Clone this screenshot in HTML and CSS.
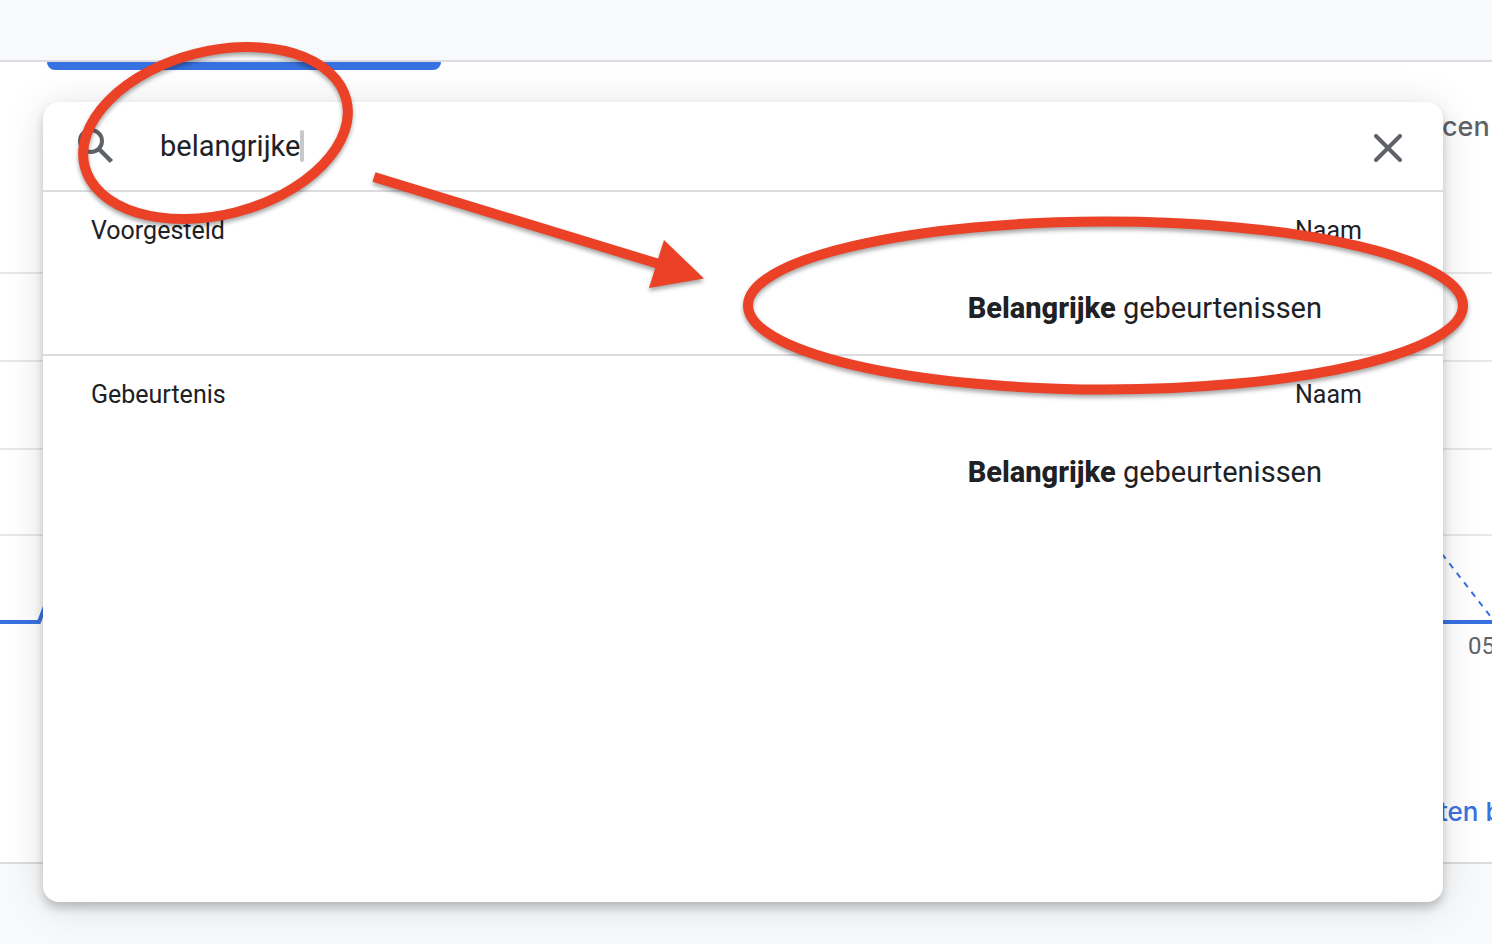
FILE: index.html
```
<!DOCTYPE html>
<html lang="nl">
<head>
<meta charset="UTF-8">
<meta name="viewport" content="width=device-width, initial-scale=1.0">
<title>Zoeken</title>
<link rel="stylesheet" href="styles.css">
</head>
<body>

<main class="report">
  <div class="tab-indicator"></div>
  <div class="report-title">cen</div>

  <div class="chart">
    <div class="grid-line"></div>
    <div class="grid-line"></div>
    <div class="grid-line short"></div>
    <div class="grid-line last">
      <svg width="50" height="88" viewBox="0 0 50 88">
        <path d="M0 86H39L49 60" fill="none" stroke="#3871e0" stroke-width="4"/>
      </svg>
      <svg width="52" height="88" viewBox="0 0 52 88">
        <path d="M0 86H52" stroke="#3871e0" stroke-width="4"/>
        <path d="M2 18L51 81" stroke="#3871e0" stroke-width="2" stroke-dasharray="6 6"/>
      </svg>
    </div>
    <div class="axis-label">05</div>
  </div>

  <a class="report-link" href="#">ten b</a>
</main>

<div class="dialog" role="dialog" aria-label="Zoeken">
  <div class="search">
    <svg class="search-icon" viewBox="0 0 36 36">
      <circle cx="13" cy="13" r="11" fill="none" stroke="#5f6368" stroke-width="4"/>
      <path d="M20.500 20.500L33.500 33.500" stroke="#5f6368" stroke-width="4.500"/>
    </svg>
    <input type="text" class="search-input" value="belangrijke" aria-label="Items zoeken">
    <span class="caret"></span>
    <button type="button" class="close" aria-label="Sluiten">
      <svg width="28" height="28" viewBox="0 0 28 28">
        <path d="M2 2L26 26M26 2L2 26" stroke="#5f6368" stroke-width="4" stroke-linecap="round"/>
      </svg>
    </button>
  </div>

  <section class="group">
    <div class="group-header"><span>Voorgesteld</span><span>Naam</span></div>
    <a class="result" href="#"><b>Belangrijke</b> gebeurtenissen</a>
  </section>
  <section class="group">
    <div class="group-header"><span>Gebeurtenis</span><span>Naam</span></div>
    <a class="result" href="#"><b>Belangrijke</b> gebeurtenissen</a>
  </section>
</div>

<!-- markings on top of everything -->
<svg class="marks" viewBox="0 0 1492 944">
  <g fill="none" stroke="#ea4127" stroke-width="10">
    <ellipse cx="215.500" cy="133" rx="135" ry="81.800" transform="rotate(-14.4 215.500 133)"/>
    <ellipse cx="1105.500" cy="305.500" rx="357.500" ry="84"/>
    <path d="M374 177L659 264"/>
  </g>
  <path d="M664 240L704 278.500L649 288Z" fill="#ea4127"/>
</svg>

</body>
</html>
```

FILE: styles.css
```
* {
  box-sizing: border-box;
}

body {
  margin: 0;
  padding: 60px 0 80px;
  min-height: 100vh;
  display: flex;
  flex-direction: column;
  font-family: Roboto, "Liberation Sans", sans-serif;
  color: #202124;
  background-color: #f8f9fb;
}

.report {
  flex: 1;
  overflow: hidden;
  background-color: #ffffff;
  border-top: 2px solid #dadce0;
  border-bottom: 2px solid #dadce0;
}

.tab-indicator {
  width: 394px;
  height: 8px;
  margin-left: 47px;
  border-radius: 0 0 8px 8px;
  background-color: #3871e0;
}

.report-title {
  width: 50px;
  margin: 40px 0 128px auto;
  font-family: Inter, sans-serif;
  font-size: 27px;
  font-weight: 500;
  line-height: 34px;
  color: #5f6368;
}

.grid-line {
  height: 88px;
  border-top: 2px solid #e8e8e8;
}

.grid-line.short {
  height: 86px;
}

.grid-line.last {
  display: flex;
  justify-content: space-between;
  height: 90px;
}

.axis-label {
  width: 24px;
  margin: 8px 0 0 auto;
  font-size: 24px;
  line-height: 28px;
  color: #5f6368;
}

.report-link {
  display: block;
  width: 53px;
  margin: 135px 0 0 auto;
  font-family: Inter, sans-serif;
  font-size: 26px;
  font-weight: 500;
  line-height: 34px;
  color: #3871e0;
  text-decoration: none;
  white-space: nowrap;
}

.dialog {
  position: absolute;
  top: 102px;
  right: 49px;
  bottom: 42px;
  left: 43px;
  border-radius: 16px;
  background-color: #ffffff;
  box-shadow: 0 6px 10px rgba(0, 0, 0, 0.2), 0 4px 40px rgba(0, 0, 0, 0.12);
}

.search {
  display: flex;
  align-items: center;
  height: 90px;
  padding: 0 41px 0 35px;
  border-bottom: 2px solid #dadce0;
}

.search-icon {
  width: 36px;
  height: 36px;
}

.search-input {
  field-sizing: content;
  margin-left: 46px;
  padding: 0;
  border: none;
  outline: none;
  font-family: inherit;
  font-size: 29px;
  color: #202124;
}

.caret {
  width: 4px;
  height: 32px;
  border-radius: 2px;
  background-color: #c8c8c8;
}

.close {
  display: flex;
  margin-left: auto;
  padding: 4px 0 0;
  border: none;
  background: none;
  cursor: pointer;
}

.group {
  padding-bottom: 8px;
}

.group + .group {
  border-top: 2px solid #dadce0;
}

.group-header {
  display: flex;
  justify-content: space-between;
  padding: 0 81px 0 48px;
  font-size: 25px;
  line-height: 78px;
}

.result {
  display: block;
  padding-right: 121px;
  font-size: 29px;
  line-height: 76px;
  text-align: right;
  color: #202124;
  text-decoration: none;
}

.result b {
  font-weight: 800;
}

.marks {
  position: absolute;
  top: 0;
  left: 0;
  width: 100%;
  pointer-events: none;
  filter: drop-shadow(0 3px 2px rgba(0, 0, 0, 0.35));
}
```
